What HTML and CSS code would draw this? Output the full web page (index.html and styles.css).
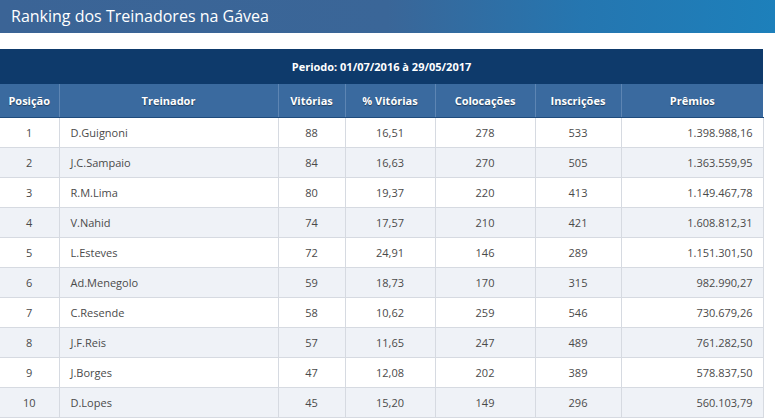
FILE: index.html
```html
<!DOCTYPE html>
<html lang="pt-BR">
<head>
<meta charset="utf-8">
<title>Ranking dos Treinadores na Gávea</title>
<link rel="stylesheet" href="styles.css">
</head>
<body>
<header class="page-header"><h1 class="page-title">Ranking dos Treinadores na Gávea</h1></header>
<table class="ranking">
  <colgroup>
    <col class="c-pos"><col class="c-name"><col class="c-vit"><col class="c-pct"><col class="c-col"><col class="c-ins"><col class="c-pre">
  </colgroup>
  <thead>
    <tr class="period"><th colspan="7">Periodo: 01/07/2016 à 29/05/2017</th></tr>
    <tr class="heads">
      <th>Posição</th><th>Treinador</th><th>Vitórias</th><th>% Vitórias</th><th>Colocações</th><th>Inscrições</th><th>Prêmios</th>
    </tr>
  </thead>
  <tbody>
    <tr><td>1</td><td class="name">D.Guignoni</td><td>88</td><td>16,51</td><td>278</td><td>533</td><td class="money">1.398.988,16</td></tr>
    <tr><td>2</td><td class="name">J.C.Sampaio</td><td>84</td><td>16,63</td><td>270</td><td>505</td><td class="money">1.363.559,95</td></tr>
    <tr><td>3</td><td class="name">R.M.Lima</td><td>80</td><td>19,37</td><td>220</td><td>413</td><td class="money">1.149.467,78</td></tr>
    <tr><td>4</td><td class="name">V.Nahid</td><td>74</td><td>17,57</td><td>210</td><td>421</td><td class="money">1.608.812,31</td></tr>
    <tr><td>5</td><td class="name">L.Esteves</td><td>72</td><td>24,91</td><td>146</td><td>289</td><td class="money">1.151.301,50</td></tr>
    <tr><td>6</td><td class="name">Ad.Menegolo</td><td>59</td><td>18,73</td><td>170</td><td>315</td><td class="money">982.990,27</td></tr>
    <tr><td>7</td><td class="name">C.Resende</td><td>58</td><td>10,62</td><td>259</td><td>546</td><td class="money">730.679,26</td></tr>
    <tr><td>8</td><td class="name">J.F.Reis</td><td>57</td><td>11,65</td><td>247</td><td>489</td><td class="money">761.282,50</td></tr>
    <tr><td>9</td><td class="name">J.Borges</td><td>47</td><td>12,08</td><td>202</td><td>389</td><td class="money">578.837,50</td></tr>
    <tr><td>10</td><td class="name">D.Lopes</td><td>45</td><td>15,20</td><td>149</td><td>296</td><td class="money">560.103,79</td></tr>
  </tbody>
</table>
</body>
</html>
```

FILE: styles.css
```css
html, body {
  margin: 0;
  padding: 0;
  background: #ffffff;
  font-family: "Open Sans", "Noto Sans", sans-serif;
  overflow: hidden;
}
.page-header {
  height: 33px;
  background: linear-gradient(to right, #3b6496 0%, #3a6698 50%, #2576b0 75%, #1d80bb 100%);
  display: flex;
  align-items: center;
  padding-left: 11px;
}
.page-title {
  margin: 0;
  font-size: 16px;
  font-weight: 400;
  color: #ffffff;
  line-height: 1;
  padding-bottom: 2px;
}
.ranking {
  margin-top: 16px;
  width: 763px;
  border-collapse: collapse;
  table-layout: fixed;
  font-size: 11px;
}
.c-pos { width: 59px; }
.c-name { width: 219px; }
.c-vit { width: 67px; }
.c-pct { width: 90px; }
.c-col { width: 100px; }
.c-ins { width: 86px; }
.c-pre { width: 142px; }
.period th {
  height: 35px;
  padding: 0;
  background: #0e3a6b;
  color: #ffffff;
  font-weight: 700;
  font-size: 11px;
  text-align: center;
}
.heads th {
  height: 33px;
  padding: 0;
  background: #3a6a9f;
  color: #ffffff;
  font-weight: 700;
  font-size: 11px;
  text-align: center;
  text-shadow: 0 1px 1px rgba(0, 0, 0, 0.45);
  border-left: 1px solid #5d85b3;
  border-bottom: 1px solid #1f4b7c;
}
.heads th:first-child { border-left: none; }
.ranking td {
  height: 29px;
  padding: 0;
  text-align: center;
  color: #4a4a4a;
  border-left: 1px solid #d6dae1;
  border-bottom: 1px solid #d6dae1;
}
.ranking td:first-child { border-left: none; }
.ranking td:last-child { border-right: 1px solid #d6dae1; }
.ranking tbody tr:nth-child(even) td { background: #eff2f7; }
.ranking td.name { text-align: left; padding-left: 11px; }
.ranking td.money { text-align: right; padding-right: 10px; }
```
